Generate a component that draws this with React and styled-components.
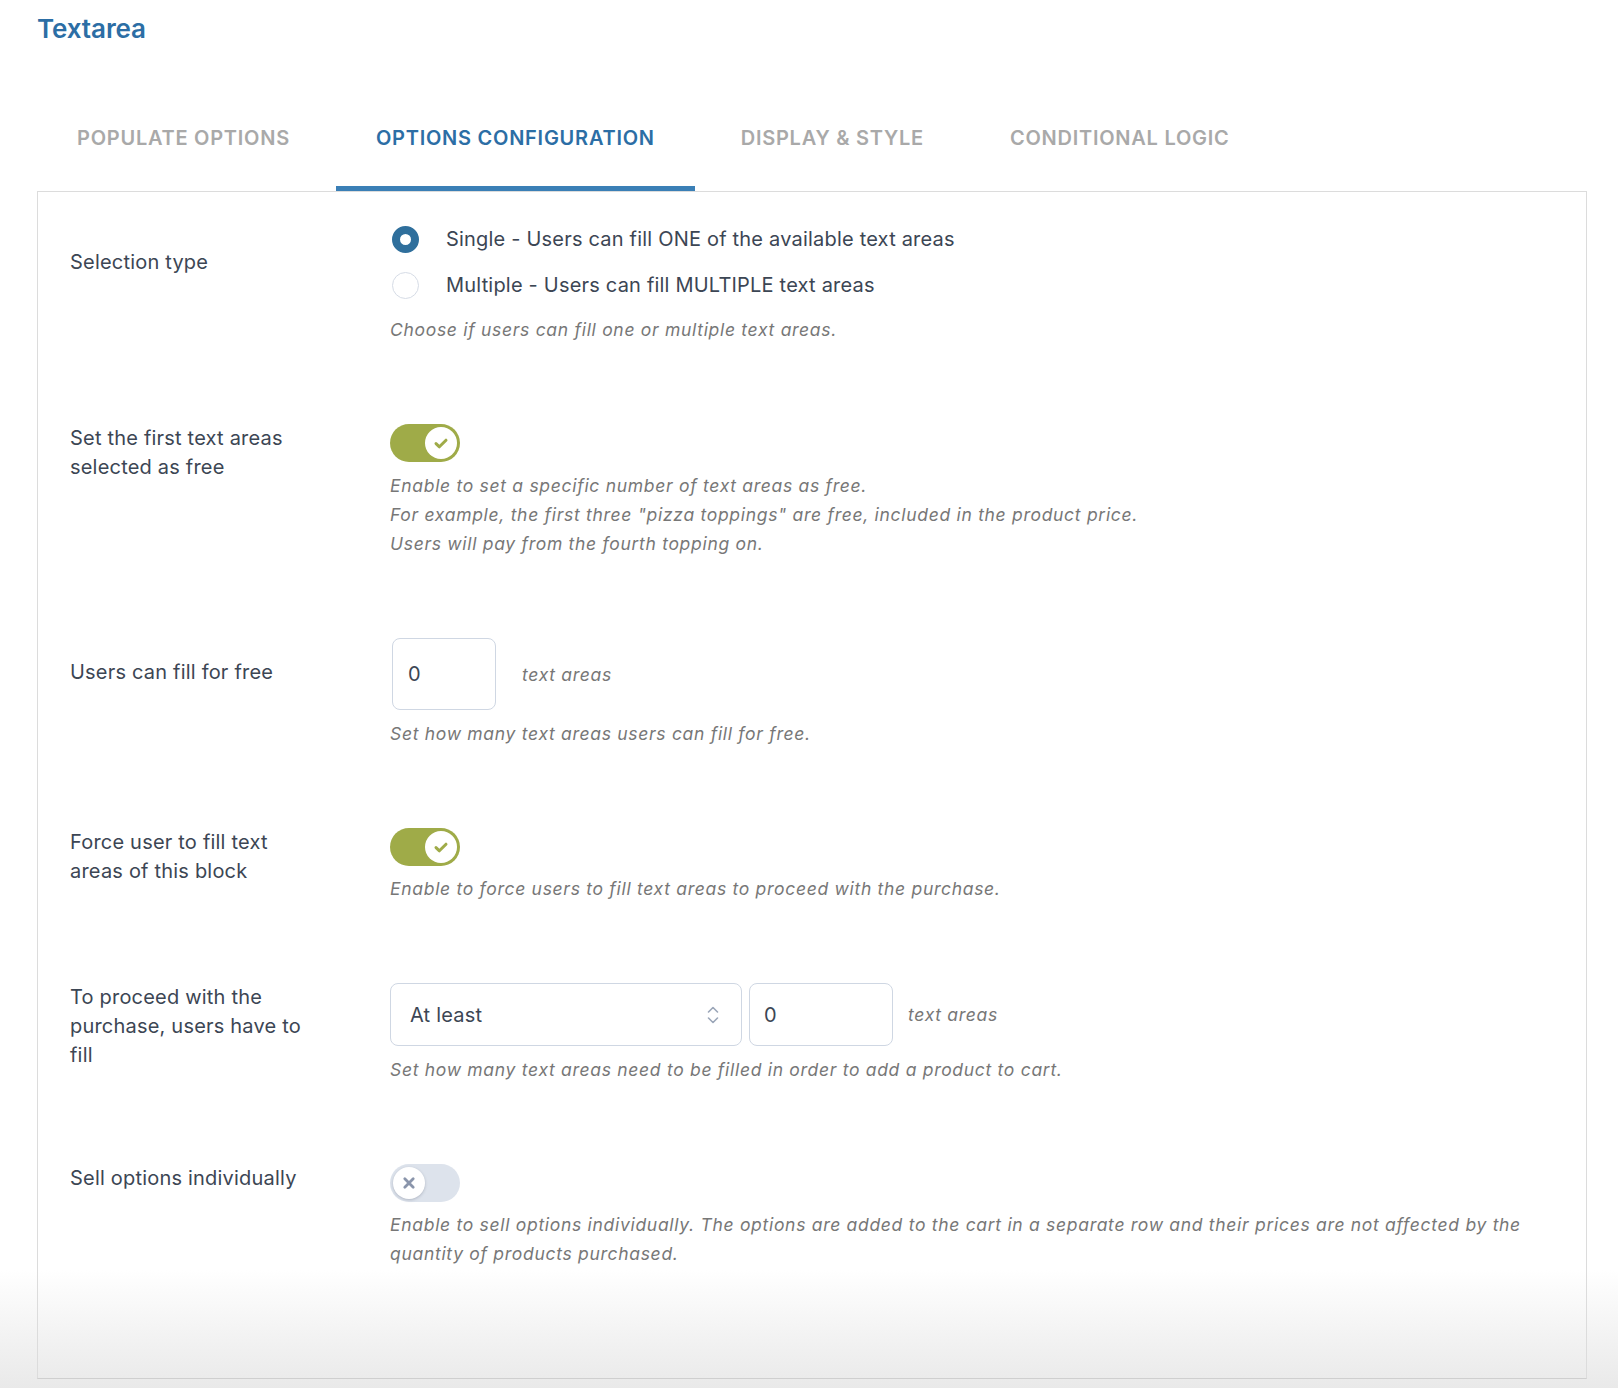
import React from "react";
import styled, { createGlobalStyle } from "styled-components";

const GlobalStyle = createGlobalStyle`
  html, body {
    margin: 0;
    padding: 0;
  }
  body {
    font-family: Inter, "Noto Sans", "Liberation Sans", sans-serif;
    background: linear-gradient(to bottom, #ffffff 0, #ffffff 1270px, #e9e9e9 1388px);
    min-height: 1388px;
  }
`;

const rows = [
  { id: "type", label: "Selection type", offset: 23 },
  { id: "free", label: "Set the first text areas selected as free", offset: 0 },
  { id: "count", label: "Users can fill for free", offset: 20 },
  { id: "force", label: "Force user to fill text areas of this block", offset: 0 },
  { id: "proceed", label: "To proceed with the purchase, users have to fill", offset: 0 },
  { id: "sell", label: "Sell options individually", offset: 0 },
];

const tabs = ["Populate options", "Options configuration", "Display & style", "Conditional logic"];

const CheckIcon = () => (
  <svg width="18" height="18" viewBox="0 0 18 18">
    <path d="M4 9.6l3.4 3.2L14 6.2" fill="none" stroke="#9fab48" strokeWidth="3" strokeLinecap="round" strokeLinejoin="round" />
  </svg>
);

const CrossIcon = () => (
  <svg width="14" height="14" viewBox="0 0 14 14">
    <path d="M2.8 2.8l8.4 8.4M11.2 2.8l-8.4 8.4" fill="none" stroke="#8a95ab" strokeWidth="2.8" strokeLinecap="round" />
  </svg>
);

const Chevrons = () => (
  <svg width="16" height="24" viewBox="0 0 16 24">
    <path d="M3.5 9l4.5-4.5 4.5 4.5M3.5 15l4.5 4.5 4.5-4.5" fill="none" stroke="#9ba6b8" strokeWidth="1.6" strokeLinecap="round" strokeLinejoin="round" />
  </svg>
);

const Toggle = ({ on }) => (
  <Switch $on={on}>
    <Knob $on={on}>{on ? <CheckIcon /> : <CrossIcon />}</Knob>
  </Switch>
);

const App = () => {
  return (
    <>
      <GlobalStyle />
      <Page>
        <Title>Textarea</Title>
        <TabBar>
          {tabs.map((t, i) => (
            <Tab key={t} $active={i === 1}>{t}</Tab>
          ))}
        </TabBar>
        <Panel>
          <Row>
            <Label $offset={rows[0].offset}>{rows[0].label}</Label>
            <Field>
              <RadioList>
                <RadioOption>
                  <Radio $checked />
                  Single - Users can fill ONE of the available text areas
                </RadioOption>
                <RadioOption>
                  <Radio />
                  Multiple - Users can fill MULTIPLE text areas
                </RadioOption>
              </RadioList>
              <Help $gap={15}>Choose if users can fill one or multiple text areas.</Help>
            </Field>
          </Row>

          <Row>
            <Label $offset={rows[1].offset}>{rows[1].label}</Label>
            <Field>
              <Toggle on />
              <Help $gap={9}>
                Enable to set a specific number of text areas as free.
                <br />
                For example, the first three "pizza toppings" are free, included in the product price.
                <br />
                Users will pay from the fourth topping on.
              </Help>
            </Field>
          </Row>

          <Row>
            <Label $offset={rows[2].offset}>{rows[2].label}</Label>
            <Field>
              <Inline $gap={26}>
                <NumberBox $w={104} $h={72} $pad={15} $shift={2}>0</NumberBox>
                <Unit>text areas</Unit>
              </Inline>
              <Help $gap={9}>Set how many text areas users can fill for free.</Help>
            </Field>
          </Row>

          <Row>
            <Label $offset={rows[3].offset}>{rows[3].label}</Label>
            <Field>
              <Toggle on />
              <Help $gap={8}>Enable to force users to fill text areas to proceed with the purchase.</Help>
            </Field>
          </Row>

          <Row>
            <Label $offset={rows[4].offset}>{rows[4].label}</Label>
            <Field>
              <Inline $gap={7}>
                <SelectBox>
                  At least
                  <Chevrons />
                </SelectBox>
                <NumberBox $w={144} $h={63} $pad={14}>0</NumberBox>
                <Unit $ml={8}>text areas</Unit>
              </Inline>
              <Help $gap={9}>Set how many text areas need to be filled in order to add a product to cart.</Help>
            </Field>
          </Row>

          <Row>
            <Label $offset={rows[5].offset}>{rows[5].label}</Label>
            <Field>
              <Toggle on={false} />
              <Help $gap={8}>
                Enable to sell options individually. The options are added to the cart in a separate row and their prices are not affected by the quantity of products purchased.
              </Help>
            </Field>
          </Row>
        </Panel>
      </Page>
    </>
  );
};

const Page = styled.div`
  padding: 14px 31px 9px 37px;
`;

const Title = styled.h1`
  margin: 0;
  font-size: 26px;
  line-height: 30px;
  font-weight: 600;
  color: #2c6ea5;
  letter-spacing: -0.1px;
`;

const TabBar = styled.div`
  display: flex;
  gap: 6px;
  margin-top: 55px;
`;

const Tab = styled.div`
  padding: 27px 40px 36px;
  font-size: 20px;
  line-height: 24px;
  font-weight: 600;
  text-transform: uppercase;
  letter-spacing: 0.75px;
  color: ${(p) => (p.$active ? "#2c6ea5" : "#a9a9a9")};
  border-bottom: 5px solid ${(p) => (p.$active ? "#3a7fb6" : "transparent")};
`;

const Panel = styled.div`
  border: 1px solid #dcdcdc;
  border-bottom-color: #cfcfcf;
  padding: 33px 32px 110px;
  display: flex;
  flex-direction: column;
  gap: 80px;
`;

const Row = styled.div`
  display: grid;
  grid-template-columns: 320px 1fr;
  align-items: start;
`;

const Label = styled.div`
  max-width: 245px;
  padding-top: ${(p) => p.$offset}px;
  font-size: 20px;
  line-height: 29px;
  letter-spacing: 0.2px;
  color: #3c4654;
`;

const Field = styled.div`
  display: flex;
  flex-direction: column;
  align-items: flex-start;
`;

const RadioList = styled.div`
  display: flex;
  flex-direction: column;
  gap: 17px;
`;

const RadioOption = styled.label`
  display: flex;
  align-items: center;
  gap: 27px;
  padding-left: 2px;
  font-size: 20px;
  line-height: 29px;
  letter-spacing: 0.2px;
  color: #3c4654;
`;

const Radio = styled.span`
  box-sizing: border-box;
  width: 27px;
  height: 27px;
  border-radius: 50%;
  background: #fff;
  border: ${(p) => (p.$checked ? "8px solid #2f6f9c" : "1px solid #d6dce6")};
`;

const Help = styled.p`
  margin: ${(p) => p.$gap}px 0 0;
  font-size: 17.5px;
  line-height: 29px;
  font-style: italic;
  color: #777777;
  letter-spacing: 0.7px;
`;

const Switch = styled.div`
  box-sizing: border-box;
  width: 70px;
  height: 38px;
  border-radius: 19px;
  padding: 3px;
  display: flex;
  justify-content: ${(p) => (p.$on ? "flex-end" : "flex-start")};
  background: ${(p) => (p.$on ? "#9fab48" : "#dde3ec")};
`;

const Knob = styled.div`
  width: 32px;
  height: 32px;
  border-radius: 50%;
  background: #fff;
  display: flex;
  align-items: center;
  justify-content: center;
  box-shadow: ${(p) => (p.$on ? "none" : "0 1px 3px rgba(60, 70, 90, 0.28)")};
`;

const Inline = styled.div`
  display: flex;
  align-items: center;
  gap: ${(p) => p.$gap}px;
`;

const NumberBox = styled.div`
  box-sizing: border-box;
  width: ${(p) => p.$w}px;
  height: ${(p) => p.$h}px;
  margin-left: ${(p) => p.$shift || 0}px;
  padding-left: ${(p) => p.$pad}px;
  display: flex;
  align-items: center;
  border: 1px solid #cfd7e3;
  border-radius: 8px;
  background: #fff;
  font-size: 20px;
  color: #3c4654;
`;

const SelectBox = styled.div`
  box-sizing: border-box;
  width: 352px;
  height: 63px;
  padding: 0 20px 0 19px;
  display: flex;
  align-items: center;
  justify-content: space-between;
  border: 1px solid #cfd7e3;
  border-radius: 8px;
  background: #fff;
  font-size: 20px;
  letter-spacing: 0.2px;
  color: #3c4654;
`;

const Unit = styled.span`
  margin-left: ${(p) => p.$ml || 0}px;
  font-size: 17.5px;
  font-style: italic;
  color: #777777;
  letter-spacing: 0.7px;
`;

export default App;
